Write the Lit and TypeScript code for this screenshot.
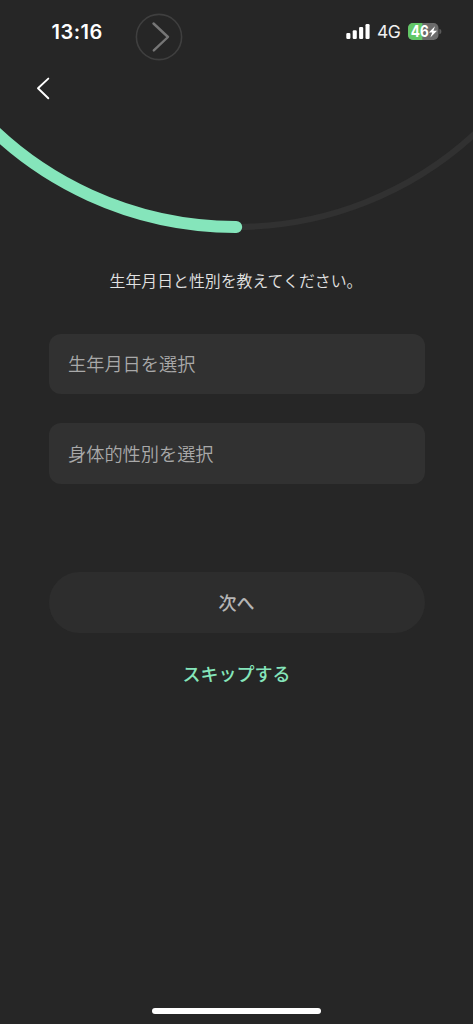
import { LitElement, html, css } from "lit";
import { customElement } from "lit/decorators.js";

@customElement("status-bar")
class StatusBar extends LitElement {
  static styles = css`
    :host {
      display: flex;
      height: 64px;
      box-sizing: border-box;
      padding-left: 51.5px;
      padding-right: 31px;
      align-items: center;
      color: #fff;
    }
    .time {
      font: 600 20px/24px Inter, sans-serif;
      letter-spacing: 0.5px;
      width: 83.5px;
    }
    .touch {
      width: 48px;
      height: 48px;
      margin-top: 10px;
      flex: none;
    }
    .spacer {
      flex: 1;
    }
    .signal {
      width: 25px;
      height: 17px;
      margin-right: 6.5px;
    }
    .network {
      font: 400 17.5px/22px Inter, sans-serif;
      width: 31px;
      letter-spacing: -0.6px;
      color: #f0f0f0;
    }
    .battery {
      width: 34px;
      height: 18px;
    }
    .level {
      font: 700 15.5px Inter, sans-serif;
    }
    svg {
      display: block;
    }
  `;

  render() {
    return html`
      <span class="time">13:16</span>
      <svg class="touch" viewBox="0 0 48 48" fill="none">
        <circle cx="24" cy="24" r="22.6" stroke="#3f3f3f" stroke-width="1.6" />
        <path d="M18.5 10.5 33 24 18.8 37.4" stroke="#767676" stroke-width="2.4" stroke-linecap="round" stroke-linejoin="round" />
      </svg>
      <span class="spacer"></span>
      <svg class="signal" viewBox="0 0 25 17" fill="#fff">
        <rect x="0.3" y="8.9" width="4.1" height="6" rx="1.2" />
        <rect x="6.7" y="6.2" width="4.1" height="8.7" rx="1.2" />
        <rect x="13.1" y="2.9" width="4.1" height="12" rx="1.2" />
        <rect x="19.5" y="0" width="4.1" height="14.9" rx="1.2" />
      </svg>
      <span class="network">4G</span>
      <svg class="battery" viewBox="0 0 34 18">
        <defs>
          <clipPath id="shell"><rect x="0" y="0" width="30.5" height="17" rx="5" /></clipPath>
        </defs>
        <g clip-path="url(#shell)">
          <rect width="31" height="18" fill="#6b6b6b" />
          <rect width="14.3" height="18" fill="#62c766" />
        </g>
        <path d="M31.4 5.7c1.6.5 2 1.6 2 2.8s-.4 2.3-2 2.8z" fill="#5a5a5a" />
        <text class="level" x="2.8" y="14.2" textLength="18" lengthAdjust="spacingAndGlyphs" fill="#fff">46</text>
        <path d="M27 3.2 20.8 9.6H24.2L22.4 14.4 29 7.7H25.4Z" fill="#fff" />
      </svg>
    `;
  }
}

@customElement("app-root")
class AppRoot extends LitElement {
  static styles = css`
    :host {
      display: flex;
      flex-direction: column;
      width: 473px;
      height: 1024px;
      overflow: hidden;
      background: #262626;
      font-family: "Noto Sans CJK JP", sans-serif;
    }
    .nav {
      height: 48px;
      display: flex;
      align-items: center;
      padding-left: 36px;
      flex: none;
    }
    .back {
      width: 14px;
      height: 24px;
      display: block;
    }
    .arc {
      display: block;
      width: 473px;
      height: 128px;
      flex: none;
    }
    .title {
      margin: 29px 1px 0 0;
      text-align: center;
      font-size: 15.9px;
      font-weight: 350;
      line-height: 24px;
      color: #e2e2e2;
    }
    .form {
      display: flex;
      flex-direction: column;
      gap: 29px;
      padding: 40.5px 48.5px 0;
    }
    .field {
      height: 60.5px;
      box-sizing: border-box;
      border: 0;
      border-radius: 12px;
      background: #313131;
      color: #a9a9a9;
      font: 350 18.2px/58px "Noto Sans CJK JP", sans-serif;
      text-align: left;
      padding: 0 19.5px 1.5px;
    }
    .actions {
      display: flex;
      flex-direction: column;
      align-items: center;
      gap: 27px;
      padding: 88px 48.5px 0;
    }
    .next {
      width: 100%;
      height: 61.5px;
      border: 0;
      padding: 0;
      border-radius: 31px;
      background: #2d2d2d;
      color: #b5b5b5;
      font: 500 18px/60px "Noto Sans CJK JP", sans-serif;
    }
    .skip {
      border: 0;
      padding: 0;
      background: none;
      color: #85e5bb;
      font: 500 18px/26px "Noto Sans CJK JP", sans-serif;
    }
    .home {
      width: 169px;
      height: 6px;
      border-radius: 3px;
      background: #fff;
      margin: auto auto 10px;
    }
  `;

  render() {
    return html`
      <status-bar></status-bar>
      <nav class="nav">
        <svg class="back" viewBox="0 0 14 24" fill="none">
          <path d="M12.3 2.6 2 12.3l10.3 10" stroke="#fff" stroke-width="1.9" stroke-linecap="round" stroke-linejoin="round" />
        </svg>
      </nav>
      <svg class="arc" viewBox="0 112 473 128" fill="none">
        <circle cx="236.5" cy="-124.5" r="351.4" stroke="#313131" stroke-width="6" />
        <path d="M-30 105.5A351.4 351.4 0 0 0 236.2 226.9" stroke="#85e5bb" stroke-width="12" stroke-linecap="round" />
      </svg>
      <h1 class="title">生年月日と性別を教えてください。</h1>
      <div class="form">
        <button class="field">生年月日を選択</button>
        <button class="field">身体的性別を選択</button>
      </div>
      <div class="actions">
        <button class="next">次へ</button>
        <button class="skip">スキップする</button>
      </div>
      <div class="home"></div>
    `;
  }
}
